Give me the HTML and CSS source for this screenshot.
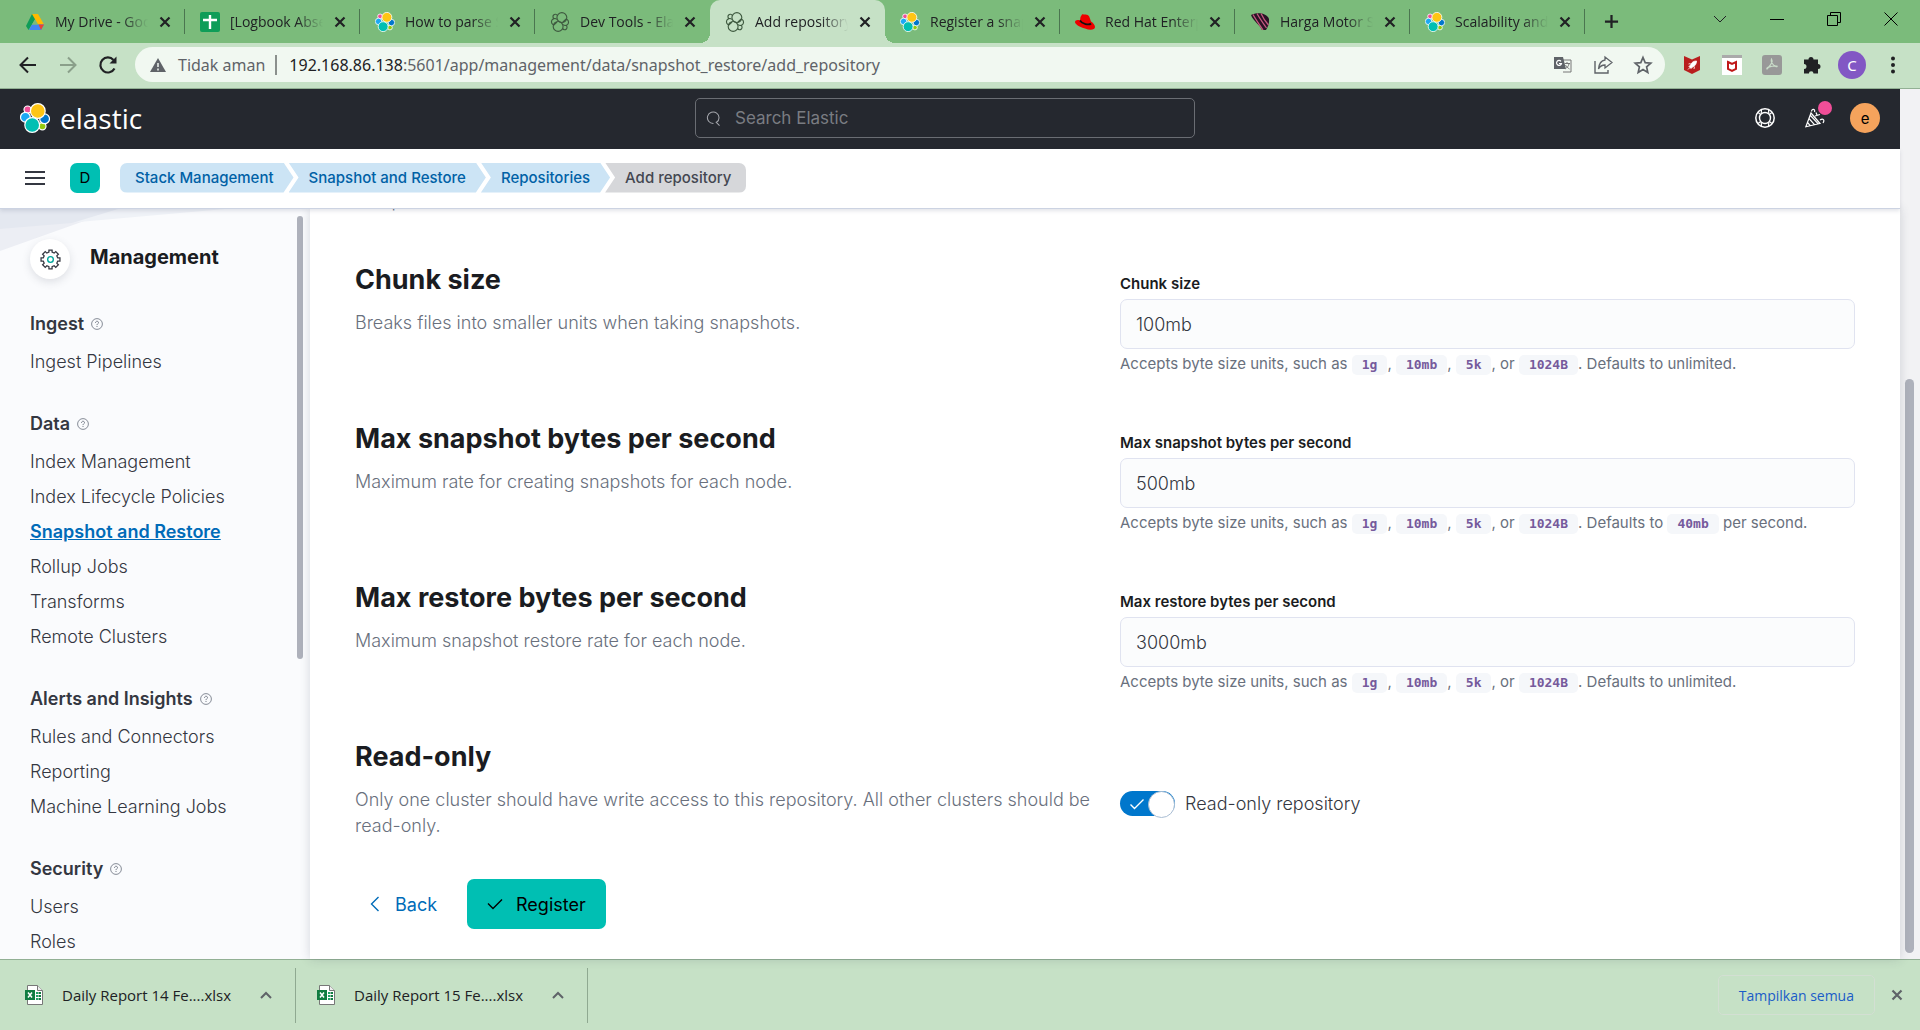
FILE: index.html
```html
<!DOCTYPE html>
<html lang="id">
<head>
<meta charset="utf-8">
<title>Add repository - Elastic</title>
<link rel="stylesheet" href="styles.css">
</head>
<body>
<svg class="sprite" aria-hidden="true">
  <symbol id="cluster" viewBox="0 0 30 30">
    <g stroke="#fff" stroke-width="1.2">
      <circle cx="7.6" cy="6.6" r="3.6" fill="#f04e98"/>
      <circle cx="22.4" cy="23.2" r="3.6" fill="#93c90e"/>
      <circle cx="5.4" cy="14.2" r="4.9" fill="#1ba9f5"/>
      <circle cx="24.6" cy="15.8" r="4.9" fill="#07c"/>
      <circle cx="17.8" cy="8" r="7.4" fill="#fec514"/>
      <circle cx="12.2" cy="22" r="7.4" fill="#00bfb3"/>
    </g>
  </symbol>
  <symbol id="cluster-line" viewBox="0 0 30 30">
    <g fill="none" stroke="#3f5a40" stroke-width="1.7">
      <path d="M11 5A3.6 3.6 0 1 0 6 10M19 25A3.6 3.6 0 1 0 24 20"/>
      <path d="M10.300 11A4.900 4.900 0 1 0 6 19.500L10.500 15M19.700 19A4.900 4.900 0 1 0 24 10.500L19.500 15"/>
      <circle cx="17.800" cy="8.300" r="7.400"/>
      <circle cx="12.200" cy="21.700" r="7.400"/>
    </g>
  </symbol>
  <symbol id="cross" viewBox="0 0 12 12"><path d="M1.500 1.500l9 9M10.500 1.500l-9 9" fill="none" stroke="currentColor" stroke-width="2.200"/></symbol>
  <symbol id="question" viewBox="0 0 12 12"><g fill="none" stroke="currentColor"><circle cx="6" cy="6" r="5.400" stroke-width=".8"/><path d="M4.500 4.800c0-2 3-2 3-.2 0 1.200-1.500 1.200-1.500 2.500M6 8v1" stroke-width=".9"/></g></symbol>
  <symbol id="excel" viewBox="0 0 18 20"><path d="M2.500.5h10l5 5v14h-15z" fill="#fff" stroke="#777"/><path d="M12.500.5v5h5" fill="#eee" stroke="#777"/><path d="M11 8h2M11 11h2M11 14h2" stroke="#21a366" stroke-width="2"/><path d="M13.500 8H16M13.500 11H16M13.500 14H16" stroke="#107c41" stroke-width="2"/><path d="M0 5h10v10H0z" fill="#107c41"/><path d="M3 7.500l4 5M7 7.500l-4 5" stroke="#fff" stroke-width="1.500"/></symbol>
  <symbol id="caret-up" viewBox="0 0 12 8"><path d="M1 7l5-5 5 5" fill="none" stroke="#5f6368" stroke-width="2"/></symbol>
</svg>

<div class="tabstrip">
  <nav class="tabs" aria-label="Tab">
    <div class="tab"><svg class="favicon" viewBox="0 0 20 20"><path d="M7 2h6l-3 5.500-6.500 10.500L1 14z" fill="#0f9d58"/><path d="M7 2h6l6 10.500h-6z" fill="#ffba00"/><path d="M4 18l3-5.500h12L16 18z" fill="#4285f4"/><path d="M13.500 12.500H19L16 18z" fill="#ea4335"/><path d="M10 7.200l3 5.300H7z" fill="#7bbb7b"/></svg><span class="tab-title">My Drive - Google Drive</span><button class="tab-close" aria-label="Tutup"><svg><use href="#cross"/></svg></button></div>
    <div class="tab"><svg class="favicon" viewBox="0 0 20 20"><rect width="20" height="20" rx="2" fill="#0f9d58"/><path d="M10 3v14M3 8h14" stroke="#fff" stroke-width="2.400"/></svg><span class="tab-title">[Logbook Absensi]</span><button class="tab-close" aria-label="Tutup"><svg><use href="#cross"/></svg></button></div>
    <div class="tab"><svg class="favicon"><use href="#cluster"/></svg><span class="tab-title">How to parse Syslog</span><button class="tab-close" aria-label="Tutup"><svg><use href="#cross"/></svg></button></div>
    <div class="tab tab-bare"><svg class="favicon"><use href="#cluster-line"/></svg><span class="tab-title">Dev Tools - Elastic</span><button class="tab-close" aria-label="Tutup"><svg><use href="#cross"/></svg></button></div>
    <div class="tab tab-active"><svg class="favicon"><use href="#cluster-line"/></svg><span class="tab-title">Add repository - Elastic</span><button class="tab-close" aria-label="Tutup"><svg><use href="#cross"/></svg></button></div>
    <div class="tab"><svg class="favicon"><use href="#cluster"/></svg><span class="tab-title">Register a snapshot</span><button class="tab-close" aria-label="Tutup"><svg><use href="#cross"/></svg></button></div>
    <div class="tab"><svg class="favicon" viewBox="0 0 20 20"><path d="M5.500 5L7 2.500c1-.8 2 .2 3 0 1.500-.4 3.500.5 4.200 2L16 9.500c2 1 4 3.500 4 5.500 0 3-5 3.500-10 1.500C5 15 0 12.500 0 10c0-1.800 2.500-2.500 5-1.500z" fill="#e00"/><path d="M5 8.500c2 3.500 9 5 11 3" fill="none" stroke="#111" stroke-width="1.800"/></svg><span class="tab-title">Red Hat Enterprise</span><button class="tab-close" aria-label="Tutup"><svg><use href="#cross"/></svg></button></div>
    <div class="tab"><svg class="favicon" viewBox="0 0 20 20"><path d="M1 3c6-3 16-2 18 4 .5 4-1 8-3 11h-4C11 14 3 9 1 3z" fill="#2a1325"/><path d="M3 2.500C6 8 9 12 13 18M7 1.500C10 7 13 11 16.500 16M11 1.500C13 6 15 9 18.500 13" stroke="#c65a80" stroke-width="1.300" fill="none"/></svg><span class="tab-title">Harga Motor Suzuki</span><button class="tab-close" aria-label="Tutup"><svg><use href="#cross"/></svg></button></div>
    <div class="tab"><svg class="favicon"><use href="#cluster"/></svg><span class="tab-title">Scalability and resilience</span><button class="tab-close" aria-label="Tutup"><svg><use href="#cross"/></svg></button></div>
  </nav>
  <button class="new-tab" aria-label="Tab baru"><svg viewBox="0 0 16 16"><path d="M8 1v14M1 8h14" stroke="#202124" stroke-width="2.400"/></svg></button>
  <div class="window-controls">
    <button aria-label="Telusuri tab"><svg viewBox="0 0 14 14"><path d="M1 4l6 6 6-6" fill="none" stroke="#202124"/></svg></button>
    <button aria-label="Minimalkan"><svg viewBox="0 0 14 14"><path d="M0 7.500h14" stroke="#000"/></svg></button>
    <button aria-label="Pulihkan"><svg viewBox="0 0 14 14"><path d="M.5 3.500h10v10H.5zM3.500 3V.5h10v10H11" fill="none" stroke="#000"/></svg></button>
    <button aria-label="Tutup jendela"><svg viewBox="0 0 14 14"><path d="M.5.5l13 13M13.500.5l-13 13" stroke="#000"/></svg></button>
  </div>
</div>

<div class="toolbar">
  <button class="tool" aria-label="Kembali"><svg viewBox="0 0 20 20"><path d="M18 10H3M10 2.500L2.500 10l7.500 7.500" fill="none" stroke="#202124" stroke-width="2"/></svg></button>
  <button class="tool" aria-label="Maju"><svg viewBox="0 0 20 20"><path d="M2 10h15M10 2.500l7.500 7.500-7.500 7.500" fill="none" stroke="#8a9f8a" stroke-width="2"/></svg></button>
  <button class="tool" aria-label="Muat ulang"><svg viewBox="0 0 20 20"><path d="M16.500 13.500A7.500 7.500 0 1 1 15.500 5" fill="none" stroke="#202124" stroke-width="2.200"/><path d="M18.500 1.500v7h-7z" fill="#202124"/></svg></button>
  <div class="omnibox">
    <svg class="warn" viewBox="0 0 16 14"><path d="M8 0l8 14H0z" fill="#5f6368"/><path d="M8 5v4M8 10.500v2" stroke="#f1f8f1" stroke-width="1.500"/></svg>
    <span class="security">Tidak aman</span>
    <span class="url"><span class="host">192.168.86.138</span>:5601/app/management/data/snapshot_restore/add_repository</span>
    <button class="tool" aria-label="Terjemahkan"><svg viewBox="0 0 20 20"><path d="M9 5h9v12h-8" fill="none" stroke="#777"/><path d="M1 2h9l3 12H1z" fill="#5f6368"/><path d="M8 6.300A2.500 2.500 0 1 0 8.500 8.500H6" fill="none" stroke="#fff" stroke-width="1.200"/><path d="M11.500 8.500H17M14 7v1.500M16 9c-.5 2-2 4-4 5M12.500 10c1 2 2.500 3 4 4" fill="none" stroke="#777"/></svg></button>
    <button class="tool" aria-label="Bagikan"><svg viewBox="0 0 20 20"><path d="M2 6v12h13v-3" fill="none" stroke="#5f6368" stroke-width="1.400"/><path d="M12 2l7 5.500-7 5.500v-3c-3 0-5 1-6.500 4C6 9 8 5.500 12 5z" fill="none" stroke="#5f6368" stroke-width="1.300"/></svg></button>
    <button class="tool" aria-label="Bookmark"><svg viewBox="0 0 20 20"><path d="M10 2.500l2.200 5.200 5.600.5-4.200 3.700 1.200 5.500-4.800-2.900-4.800 2.900 1.200-5.500-4.200-3.700 5.600-.5z" fill="none" stroke="#5f6368" stroke-width="1.700"/></svg></button>
  </div>
  <div class="extensions">
    <button class="tool" aria-label="WebBoost"><svg viewBox="0 0 20 20"><path d="M2 1l8 3.500L18 1v14l-8 4-8-4z" fill="#b91d1d"/><path d="M14.500 6c-3 0-5 1.500-6 4L7 11.500 9 13.500 10.500 12c2.500-1 4-3 4-6zM6.500 9l2-.5M12 14l.5-2.500M6 14.500l2-2" fill="#fff" stroke="#fff" stroke-width=".8"/></svg></button>
    <button class="tool" aria-label="WebAdvisor"><svg viewBox="0 0 20 20"><path d="M0 0h20v20H0z" fill="#fff"/><path d="M0 0h20v3H0z" fill="#aaa"/><path d="M6 7l4 2 4-2v7l-4 2-4-2z" fill="none" stroke="#c01818" stroke-width="2"/></svg></button>
    <button class="tool" aria-label="Acrobat"><svg viewBox="0 0 20 20"><rect width="20" height="20" rx="3" fill="#989898"/><path d="M9.500 4c1.500 2-.5 6-4.500 10-1-1 2-3 10-3 1 1.500-3 .5-5-3-1-2-1-3-.5-4z" fill="none" stroke="#c8dcc8" stroke-width="1.200"/></svg></button>
    <button class="tool" aria-label="Ekstensi"><svg viewBox="0 0 20 20"><path d="M2 4.500h4.500a2.500 2.500 0 1 1 5 0H16V9a2.500 2.500 0 1 1 0 5v4.500h-4.500a2.300 2.300 0 1 0-4.600 0H2V14a2.500 2.500 0 1 0 0-5z" fill="#202124"/></svg></button>
    <button class="profile" aria-label="Profil">C</button>
    <button class="tool" aria-label="Menu"><svg viewBox="0 0 20 20"><g fill="#202124"><circle cx="10" cy="3.500" r="2"/><circle cx="10" cy="10" r="2"/><circle cx="10" cy="16.500" r="2"/></g></svg></button>
  </div>
</div>

<div class="viewport">
  <div class="app">
    <header class="header">
      <a class="brand" href="#"><svg class="brand-mark"><use href="#cluster"/></svg><span>elastic</span></a>
      <label class="search">
        <svg viewBox="0 0 16 16"><path d="M12.300 12.300A6.200 6.200 0 1 0 9 13.400M11.500 11.500L15.500 15.500" fill="none" stroke="#a5a7ad" stroke-width="1.100"/></svg>
        <input type="search" placeholder="Search Elastic" aria-label="Search Elastic">
      </label>
      <div class="header-actions">
        <button aria-label="Help"><svg viewBox="0 0 20 20" fill="none" stroke="#fff"><circle cx="10" cy="10" r="9.200" stroke-width="1.500"/><circle cx="10" cy="10" r="5.500" stroke-width="1.400"/><path d="M6.500 1.800L6.200 5.800M3.200 4.500L5.600 6.600M13.500 1.800L13.800 5.800M16.800 4.500L14.400 6.600M6.500 18.200L6.200 14.200M3.200 15.500L5.600 13.400M13.500 18.200L13.800 14.200M16.800 15.500L14.400 13.400" stroke-width="1.200"/></svg></button>
        <button class="news" aria-label="News"><svg viewBox="0 0 20 20" fill="none" stroke="#fff" stroke-width="1.200"><path d="M6 5L.8 18.800 15 15.500zM4 10.500l5.500 6.200M5.500 7.500l7.500 8.200M2.500 14.500l3 3.300"/><path d="M6.500 3.500c0-3 4-3 3 .5M10 8l5-1.500M11 4.500l1 2.500M15 12c3-2 5 0 3 3"/></svg></button>
        <button class="avatar" aria-label="Account">e</button>
      </div>
    </header>
    <div class="subheader">
      <button class="menu" aria-label="Menu"><svg viewBox="0 0 20 16"><path d="M0 2h20M0 8h20M0 14h20" stroke="#343741" stroke-width="2"/></svg></button>
      <button class="space" aria-label="Default">D</button>
      <nav class="crumbs" aria-label="Breadcrumbs">
        <a href="#">Stack Management</a><a href="#">Snapshot and Restore</a><a href="#">Repositories</a><span>Add repository</span>
      </nav>
    </div>

    <div class="body">
      <aside class="sidebar">
        <svg class="facets" viewBox="0 0 226 42"><path d="M0 0h118L0 42z" fill="#eceef4"/><path d="M0 0h225L0 20z" fill="#eff2f7"/><path d="M0 0h118L72 14 0 20z" fill="#e4e8f0"/></svg>
        <div class="sidebar-scroll">
          <div class="side-title">
            <span class="side-icon"><svg viewBox="0 0 20 20" fill="none"><path d="M8.500 1h3v2l2 .9L15 2.500 17.500 5 16 6.500l.9 2H19v3h-2.100l-.9 2 1.500 1.500-2.500 2.500-1.500-1.500-2 .9V19h-3v-2.100l-2-.9L5 17.500 2.500 15 4 13.500l-.9-2H1v-3h2.100l.9-2L2.500 5 5 2.500l1.500 1.400 2-.9z" stroke="#343741" stroke-width="1.200"/><circle cx="10" cy="10" r="2.700" stroke="#00a69c" stroke-width="1.300"/></svg></span>
            <h2>Management</h2>
          </div>
          <section><h3>Ingest <svg><use href="#question"/></svg></h3><a href="#">Ingest Pipelines</a></section>
          <section><h3>Data <svg><use href="#question"/></svg></h3><a href="#">Index Management</a><a href="#">Index Lifecycle Policies</a><a class="current" href="#">Snapshot and Restore</a><a href="#">Rollup Jobs</a><a href="#">Transforms</a><a href="#">Remote Clusters</a></section>
          <section><h3>Alerts and Insights <svg><use href="#question"/></svg></h3><a href="#">Rules and Connectors</a><a href="#">Reporting</a><a href="#">Machine Learning Jobs</a></section>
          <section><h3>Security <svg><use href="#question"/></svg></h3><a href="#">Users</a><a href="#">Roles</a></section>
        </div>
        <div class="side-thumb"></div>
      </aside>

      <main class="content">
        <div class="peek"><p>compressed.</p></div>
        <form class="form">
          <div class="row">
            <div class="about"><h2>Chunk size</h2><p>Breaks files into smaller units when taking snapshots.</p></div>
            <div class="field"><label for="chunk">Chunk size</label><input id="chunk" type="text" value="100mb"><p>Accepts byte size units, such as <code>1g</code>, <code>10mb</code>, <code>5k</code>, or <code>1024B</code>. Defaults to unlimited.</p></div>
          </div>
          <div class="row">
            <div class="about"><h2>Max snapshot bytes per second</h2><p>Maximum rate for creating snapshots for each node.</p></div>
            <div class="field"><label for="snap">Max snapshot bytes per second</label><input id="snap" type="text" value="500mb"><p>Accepts byte size units, such as <code>1g</code>, <code>10mb</code>, <code>5k</code>, or <code>1024B</code>. Defaults to <code>40mb</code> per second.</p></div>
          </div>
          <div class="row">
            <div class="about"><h2>Max restore bytes per second</h2><p>Maximum snapshot restore rate for each node.</p></div>
            <div class="field"><label for="restore">Max restore bytes per second</label><input id="restore" type="text" value="3000mb"><p>Accepts byte size units, such as <code>1g</code>, <code>10mb</code>, <code>5k</code>, or <code>1024B</code>. Defaults to unlimited.</p></div>
          </div>
          <div class="row">
            <div class="about"><h2>Read-only</h2><p>Only one cluster should have write access to this repository. All other clusters should be read-only.</p></div>
            <div class="toggle">
              <span class="switch"><input id="readonly" type="checkbox" role="switch" checked><svg viewBox="0 0 16 12"><path d="M1.500 6.500l4 4 9-9" fill="none" stroke="#fff" stroke-width="1.400"/></svg></span>
              <label for="readonly">Read-only repository</label>
            </div>
          </div>
          <div class="actions">
            <button class="back" type="button"><svg viewBox="0 0 10 16"><path d="M8.500 1L1.500 8l7 7" fill="none" stroke="currentColor" stroke-width="1.400"/></svg>Back</button>
            <button class="register" type="button"><svg viewBox="0 0 16 12"><path d="M1 5.500l5 5 9-9" fill="none" stroke="currentColor" stroke-width="1.400"/></svg>Register</button>
          </div>
        </form>
      </main>
    </div>
  </div>
  <div class="page-scroll"><div class="page-thumb"></div></div>
</div>

<footer class="downloads">
  <div class="download"><svg class="file"><use href="#excel"/></svg><span>Daily Report 14 Fe....xlsx</span><button aria-label="Opsi"><svg><use href="#caret-up"/></svg></button></div>
  <div class="download"><svg class="file"><use href="#excel"/></svg><span>Daily Report 15 Fe....xlsx</span><button aria-label="Opsi"><svg><use href="#caret-up"/></svg></button></div>
  <button class="show-all">Tampilkan semua</button>
  <button class="bar-close" aria-label="Tutup"><svg><use href="#cross"/></svg></button>
</footer>
</body>
</html>
```
FILE: styles.css
```css
* { box-sizing: border-box; }
html { height: 100%; }
body {
  margin: 0;
  height: 100vh;
  display: flex;
  flex-direction: column;
  overflow: hidden;
  font-family: Inter, "Liberation Sans", sans-serif;
  font-size: 18px;
  color: #343741;
}
button {
  border: 0;
  padding: 0;
  background: none;
  font: inherit;
  color: inherit;
  display: flex;
  align-items: center;
  justify-content: center;
}
h2, h3, p { margin: 0; }
a { color: inherit; text-decoration: none; }
svg { display: block; flex: none; }
.sprite { position: absolute; width: 0; height: 0; }

/* Browser tab strip */
.tabstrip {
  flex: none;
  height: 43px;
  display: flex;
  background: #7bbb7b;
  font-family: "Open Sans", "Liberation Sans", sans-serif;
  font-size: 14px;
  color: #202124;
}
.tabs { display: flex; padding-left: 10px; }
.tab {
  position: relative;
  width: 175px;
  display: flex;
  align-items: center;
  padding: 0 14px 0 15px;
}
.tab::after {
  content: "";
  position: absolute;
  right: 0;
  top: 9px;
  width: 1px;
  height: 25px;
  background: #4b7550;
}
.tab-bare::after, .tab-active::after { display: none; }
.tab-active { background: #c6e1c6; border-radius: 10px 10px 0 0; }
.tab-active::before {
  content: "";
  position: absolute;
  left: -10px;
  right: -10px;
  bottom: 0;
  height: 10px;
  background:
    radial-gradient(circle at 0 0, transparent 10px, #c6e1c6 10px) left / 10px 10px no-repeat,
    radial-gradient(circle at 100% 0, transparent 10px, #c6e1c6 10px) right / 10px 10px no-repeat;
}
.favicon { width: 20px; height: 20px; margin-right: 10px; }
.tab-title {
  flex: 1;
  overflow: hidden;
  white-space: nowrap;
  mask-image: linear-gradient(to right, #000 70%, transparent 98%);
}
.tab-close { margin-left: 9px; }
.tab-close svg { width: 12px; height: 12px; }
.new-tab { width: 52px; }
.new-tab svg { width: 15px; height: 15px; }
.window-controls { margin-left: auto; padding-right: 1px; display: flex; }
.window-controls button { width: 57px; height: 37px; }
.window-controls svg { width: 14px; height: 14px; }

/* Address bar */
.toolbar {
  flex: none;
  height: 46px;
  display: flex;
  align-items: center;
  gap: 20px;
  padding: 0 17px 2px 18px;
  background: #c6e1c6;
  border-bottom: 1px solid #92b094;
  font-family: "Noto Sans", "Open Sans", sans-serif;
  font-size: 16px;
}
.tool svg { width: 20px; height: 20px; }
.omnibox {
  flex: 1;
  min-width: 0;
  height: 35px;
  display: flex;
  align-items: center;
  gap: 20px;
  padding: 0 12px 0 15px;
  margin-left: -3px;
  border-radius: 18px;
  background: #f1f8f1;
  color: #5f6368;
}
.warn { width: 16px; height: 14px; }
.security { margin-left: -8px; padding-right: 10px; border-right: 2px solid #8b908d; line-height: 20px; }
.url { flex: 1; margin-left: -8px; white-space: nowrap; overflow: hidden; }
.host { color: #202124; }
.extensions { display: flex; align-items: center; gap: 20px; margin-left: -3px; }
.profile { width: 28px; height: 28px; margin: 0 -3px 0 -4px; border-radius: 50%; background: #8257c4; color: #fff; font-size: 15px; }

/* Page area */
.viewport { flex: 1; min-height: 0; display: flex; }
.app { flex: 1; min-width: 0; display: flex; flex-direction: column; }
.page-scroll { width: 20px; display: flex; padding: 290px 6px 6px 5px; background: #f2f2f4; }
.page-thumb { flex: 1; border-radius: 5px; background: #aeb1bb; }

.header {
  flex: none;
  height: 60px;
  display: grid;
  grid-template-columns: 1fr 500px 1fr;
  align-items: center;
  padding: 0 20px 2px 10px;
  background: #25282f;
}
.brand {
  display: flex;
  align-items: center;
  gap: 10px;
  padding-left: 10px;
  color: #fff;
  font-family: "Open Sans", sans-serif;
  font-size: 28px;
  line-height: 30px;
}
.brand-mark { width: 30px; height: 30px; }
.search {
  height: 40px;
  display: flex;
  align-items: center;
  gap: 15px;
  padding: 0 9px;
  border: 1px solid #6a6d73;
  border-radius: 5px;
}
.search svg { width: 15px; height: 15px; }
.search input {
  flex: 1;
  border: 0;
  padding: 0;
  outline: 0;
  background: none;
  font: inherit;
  font-size: 17px;
  color: #fff;
}
.search input::placeholder { color: #7a7c82; opacity: 1; }
.header-actions { display: flex; justify-content: flex-end; align-items: center; gap: 30px; }
.header-actions svg { width: 20px; height: 20px; }
.news { position: relative; }
.news::after {
  content: "";
  position: absolute;
  left: 13px;
  top: -7px;
  width: 14px;
  height: 14px;
  border-radius: 50%;
  background: #f04e98;
}
.header-actions .avatar { width: 30px; height: 30px; margin-left: -5px; border-radius: 50%; background: #f5a35c; color: #000; font-size: 15px; }

.subheader {
  position: relative;
  z-index: 2;
  flex: none;
  height: 60px;
  display: flex;
  align-items: center;
  padding: 0 20px 2px 25px;
  background: #fff;
  border-bottom: 1px solid #ccd3e2;
  box-shadow: 0 2px 4px rgba(80, 90, 120, .16);
}
.menu svg { width: 20px; height: 16px; }
.space { width: 30px; height: 30px; margin: 0 20px 0 25px; border-radius: 7px; background: #00bfb3; color: #000; font-size: 15px; }
.crumbs { display: flex; font-size: 15px; line-height: 30px; font-weight: 500; }
.crumbs > * {
  padding: 0 20px;
  margin-right: -5px;
  background: #cce4f5;
  color: #0061a6;
  clip-path: polygon(0 0, calc(100% - 10px) 0, 100% 50%, calc(100% - 10px) 100%, 0 100%, 10px 50%);
}
.crumbs > :first-child {
  padding-left: 15px;
  border-radius: 7px 0 0 7px;
  clip-path: polygon(0 0, calc(100% - 10px) 0, 100% 50%, calc(100% - 10px) 100%, 0 100%);
}
.crumbs > :last-child {
  padding-right: 15px;
  border-radius: 0 7px 7px 0;
  background: #d6d7da;
  color: #444751;
  clip-path: polygon(0 0, 100% 0, 100% 100%, 0 100%, 10px 50%);
}

.body { flex: 1; min-height: 0; display: flex; background: #fff; font-weight: 300; }

/* Management navigation */
.sidebar {
  position: relative;
  width: 310px;
  flex: none;
  display: flex;
  align-items: flex-start;
  overflow: hidden;
  background: #fafbfd;
}
.facets { position: absolute; left: 0; top: 0; width: 226px; height: 42px; }
.sidebar-scroll { position: relative; flex: 1; padding: 30px 0 0 30px; }
.side-thumb { width: 6px; height: 59%; margin: 7px 7px 0 0; border-radius: 3px; background: #aeb1bb; }
.side-title { display: flex; align-items: center; gap: 20px; height: 40px; margin-bottom: 25px; }
.side-title h2 { font-size: 20px; line-height: 30px; font-weight: 700; color: #1a1c21; padding-bottom: 4px; }
.side-icon { width: 40px; height: 40px; border-radius: 50%; display: grid; place-items: center; background: #fff; box-shadow: 0 3px 8px rgba(60, 70, 90, .15); }
.side-icon svg { width: 21px; height: 21px; }
.sidebar section { margin-bottom: 25px; }
.sidebar h3 { display: flex; align-items: center; gap: 7px; font-size: 18px; line-height: 40px; font-weight: 600; }
.sidebar h3 svg { width: 12px; height: 12px; color: #69707d; }
.sidebar a { display: block; line-height: 35px; white-space: nowrap; }
.sidebar .current { font-weight: 600; color: #006bb8; text-decoration: underline; }

/* Repository settings */
.content { flex: 1; min-width: 0; padding: 0 45px; box-shadow: 0 0 10px rgba(60, 70, 90, .2); position: relative; overflow: hidden; }
.peek { height: 5px; display: flex; align-items: flex-end; overflow: hidden; width: 50%; }
.peek p, .about p { line-height: 26px; color: #69707d; }
.form { padding-top: 45px; }
.row { display: grid; grid-template-columns: 1fr 1fr; column-gap: 30px; margin-bottom: 43px; }
.about h2 { font-size: 27px; line-height: 42px; font-weight: 700; color: #1a1c21; margin-bottom: 9px; }
.about p { margin-right: -10px; }
.field { display: flex; flex-direction: column; padding-top: 14px; }
.field label { font-size: 15px; line-height: 22px; font-weight: 600; color: #1a1c21; margin-bottom: 4px; }
.field input {
  height: 50px;
  padding: 0 15px;
  border: 1px solid #e0e3f0;
  border-radius: 7px;
  background: #fbfcfd;
  font: inherit;
  color: #343741;
}
.field p { font-size: 15px; line-height: 22px; font-weight: 400; margin-top: 4px; color: #69707d; }
.field code {
  display: inline-block;
  padding: 2px 10px;
  border-radius: 5px;
  background: #f5f7fa;
  color: #765a9c;
  font-family: "DejaVu Sans Mono", "Liberation Mono", monospace;
  font-size: 13px;
  line-height: 16px;
  font-weight: 700;
}
.toggle { display: flex; align-items: center; gap: 10px; height: 25px; margin-top: 55px; }
.switch { position: relative; display: flex; }
.switch input { appearance: none; width: 55px; height: 25px; margin: 0; border-radius: 13px; background: #07c; }
.switch input::after { content: ""; display: block; width: 25px; height: 25px; margin-left: auto; border: 1px solid #a9bdd3; border-radius: 50%; background: #fff; }
.switch svg { position: absolute; left: 9px; top: 7px; width: 16px; height: 12px; pointer-events: none; }
.actions { display: flex; align-items: center; gap: 30px; margin-top: -3px; font-weight: 400; }
.back { padding-left: 15px; gap: 15px; color: #006bb8; }
.back svg { width: 10px; height: 16px; }
.register { height: 50px; padding: 0 20px; gap: 13px; border-radius: 7px; background: #00bfb3; color: #000; }
.register svg { width: 16px; height: 12px; }

/* Download bar */
.downloads {
  flex: none;
  height: 71px;
  display: flex;
  align-items: center;
  padding: 0 17px 0 4px;
  background: #c6e1c6;
  border-top: 1px solid #92b094;
  font-family: "Open Sans", "Liberation Sans", sans-serif;
  font-size: 15px;
  color: #202124;
}
.download { width: 292px; height: 55px; display: flex; align-items: center; padding: 0 23px 0 21px; border-right: 1px solid #8fa991; }
.download span { flex: 1; padding-left: 19px; }
.file { width: 18px; height: 20px; }
.download button svg { width: 12px; height: 8px; }
.show-all { height: 40px; padding: 0 20px; margin-left: auto; border: 1px solid #d3dfd3; border-radius: 5px; color: #1a5cc8; font-size: 14px; }
.bar-close { margin-left: 16px; color: #5f6368; }
.bar-close svg { width: 12px; height: 12px; }
```
